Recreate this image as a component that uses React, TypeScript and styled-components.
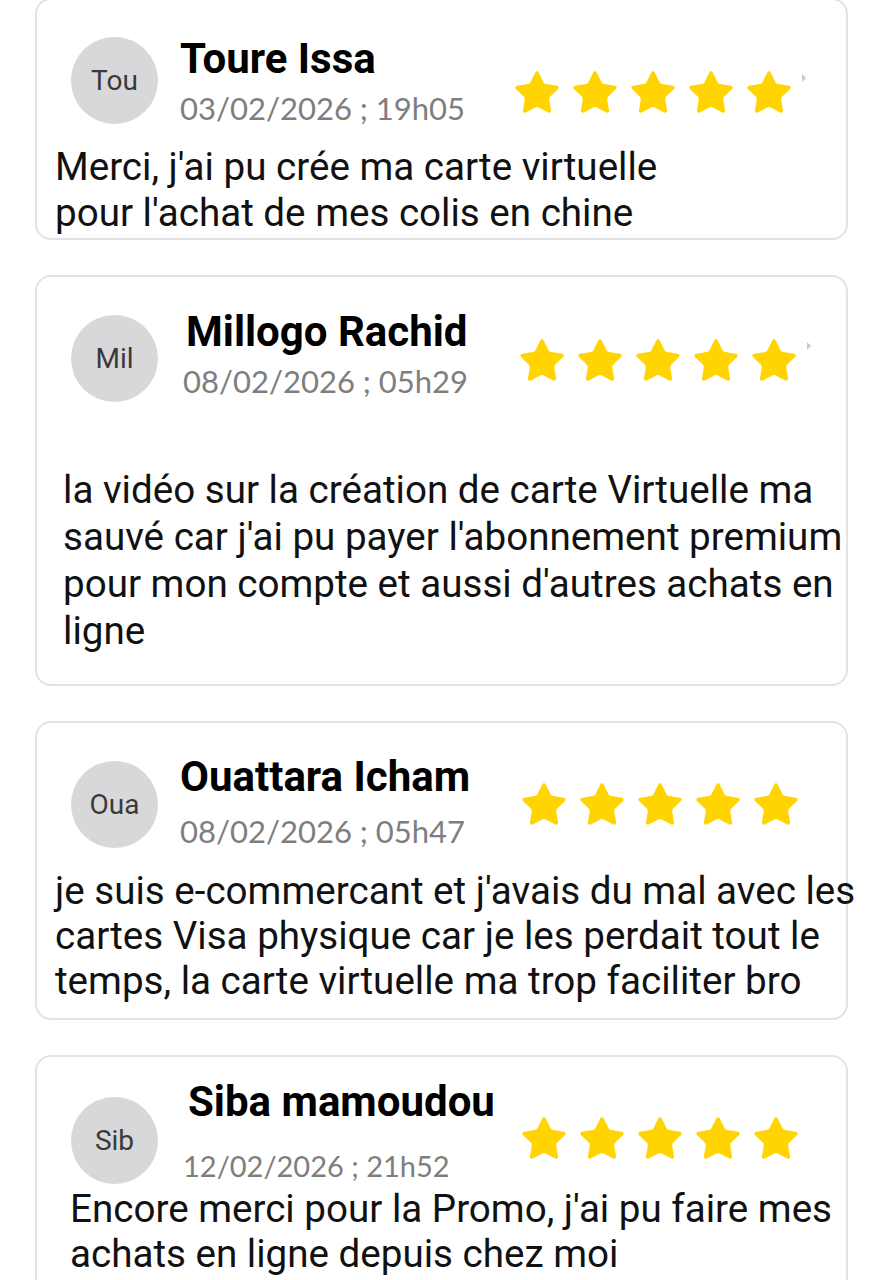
import React from "react";
import styled, { createGlobalStyle } from "styled-components";

const Global = createGlobalStyle`
  html, body { margin: 0; padding: 0; background: #ffffff; }
  body { font-family: Roboto, "Noto Sans", Arial, sans-serif; -webkit-font-smoothing: antialiased; }
  #root { height: 1280px; overflow: hidden; }
`;

const Page = styled.main`
  display: flex;
  flex-direction: column;
  gap: 35px;
  width: 813px;
  margin-top: -2px;
  padding-left: 35px;
`;

const Card = styled.section<{ $padBottom: number }>`
  box-sizing: border-box;
  width: 100%;
  display: flex;
  flex-direction: column;
  background: #ffffff;
  border: 2px solid #e3e3e5;
  border-radius: 16px;
  padding-bottom: ${(p) => p.$padBottom}px;
`;

const Header = styled.header<{ $padTop: number; $padRight: number }>`
  display: flex;
  align-items: center;
  height: 87px;
  margin-top: ${(p) => p.$padTop}px;
  padding: 0 ${(p) => p.$padRight}px 0 34px;
`;

const Avatar = styled.div`
  flex-shrink: 0;
  width: 87px;
  height: 87px;
  border-radius: 50%;
  background: #d8d8da;
  display: grid;
  place-items: center;
  font-family: Roboto, Arial, sans-serif;
  font-size: 28px;
  color: #3a3a3a;
`;

const Info = styled.div<{ $indent: number; $lift: number }>`
  flex: 1;
  display: flex;
  flex-direction: column;
  margin-left: ${(p) => p.$indent}px;
  margin-bottom: ${(p) => p.$lift}px;
`;

const Name = styled.h3<{ $size: number; $gap: number }>`
  margin: 0 0 ${(p) => p.$gap}px 0;
  font-family: Roboto, Arial, sans-serif;
  font-weight: 700;
  font-size: ${(p) => p.$size}px;
  line-height: 50px;
  color: #000000;
  white-space: nowrap;
`;

const DateLine = styled.div<{ $shift: number; $size: number }>`
  margin-left: ${(p) => p.$shift}px;
  font-family: Lato, "Open Sans", Arial, sans-serif;
  font-size: ${(p) => p.$size}px;
  line-height: 36px;
  color: #7e7e7e;
  white-space: nowrap;
`;

const Stars = styled.div<{ $shift: number }>`
  display: flex;
  align-items: center;
  gap: 8px;
  margin-top: ${(p) => p.$shift}px;
`;

const Mark = styled.span`
  width: 0;
  height: 0;
  align-self: flex-start;
  margin-top: 6px;
  border-top: 4px solid transparent;
  border-bottom: 4px solid transparent;
  border-left: 4px solid #c9c9c9;
`;

const Body = styled.p<{ $gap: number; $indent: number; $lh: number }>`
  margin: ${(p) => p.$gap}px 0 0 0;
  padding-left: ${(p) => p.$indent}px;
  font-family: Roboto, Arial, sans-serif;
  font-size: 38.6px;
  line-height: ${(p) => p.$lh}px;
  color: #111111;
  white-space: nowrap;
`;

const StarIcon = () => (
  <svg width="50" height="50" viewBox="0 0 24 24" aria-hidden="true">
    <path
      d="M11.525 2.295a.53.53 0 0 1 .95 0l2.31 4.679a2.123 2.123 0 0 0 1.595 1.16l5.166.756a.53.53 0 0 1 .294.904l-3.736 3.638a2.123 2.123 0 0 0-.611 1.878l.882 5.14a.53.53 0 0 1-.771.56l-4.618-2.428a2.122 2.122 0 0 0-1.973 0L6.396 21.01a.53.53 0 0 1-.77-.56l.881-5.139a2.122 2.122 0 0 0-.611-1.879L2.16 9.795a.53.53 0 0 1 .294-.906l5.165-.755a2.122 2.122 0 0 0 1.597-1.16z"
      fill="#FFD400"
      stroke="#FFD400"
      strokeWidth="0.8"
      strokeLinejoin="round"
    />
  </svg>
);

type Review = {
  initials: string;
  name: string;
  date: string;
  lines: string[];
  nameSize: number;
  nameIndent: number;
  nameGap: number;
  lift: number;
  dateShift: number;
  dateSize: number;
  padTop: number;
  padRight: number;
  starShift: number;
  mark: boolean;
  bodyGap: number;
  bodyIndent: number;
  lineHeight: number;
  padBottom: number;
};

const reviews: Review[] = [
  {
    initials: "Tou",
    name: "Toure Issa",
    date: "03/02/2026 ; 19h05",
    lines: ["Merci, j'ai pu crée ma carte virtuelle", "pour l'achat de mes colis en chine"],
    nameSize: 42,
    nameIndent: 22,
    nameGap: 6,
    lift: 2,
    dateShift: 0,
    dateSize: 31,
    padTop: 37,
    padRight: 40,
    starShift: 24,
    mark: true,
    bodyGap: 20,
    bodyIndent: 18,
    lineHeight: 46,
    padBottom: 2,
  },
  {
    initials: "Mil",
    name: "Millogo Rachid",
    date: "08/02/2026 ; 05h29",
    lines: [
      "la vidéo sur la création de carte Virtuelle ma",
      "sauvé car j'ai pu payer l'abonnement premium",
      "pour mon compte et aussi d'autres achats en",
      "ligne",
    ],
    nameSize: 42,
    nameIndent: 28,
    nameGap: 6,
    lift: 12,
    dateShift: -3,
    dateSize: 31,
    padTop: 38,
    padRight: 35,
    starShift: 4,
    mark: true,
    bodyGap: 64,
    bodyIndent: 26,
    lineHeight: 47,
    padBottom: 30,
  },
  {
    initials: "Oua",
    name: "Ouattara Icham",
    date: "08/02/2026 ; 05h47",
    lines: [
      "je suis e-commercant et j'avais du mal avec les",
      "cartes Visa physique car je les perdait tout le",
      "temps, la carte virtuelle ma trop faciliter bro",
    ],
    nameSize: 42,
    nameIndent: 22,
    nameGap: 11,
    lift: 9,
    dateShift: 0,
    dateSize: 31,
    padTop: 38,
    padRight: 45,
    starShift: 0,
    mark: false,
    bodyGap: 20,
    bodyIndent: 18,
    lineHeight: 45,
    padBottom: 15,
  },
  {
    initials: "Sib",
    name: "Siba mamoudou",
    date: "12/02/2026 ; 21h52",
    lines: ["Encore merci pour la Promo, j'ai pu faire mes", "achats en ligne depuis chez moi"],
    nameSize: 42,
    nameIndent: 30,
    nameGap: 21,
    lift: 21,
    dateShift: -5,
    dateSize: 29,
    padTop: 40,
    padRight: 45,
    starShift: -4,
    mark: false,
    bodyGap: 2,
    bodyIndent: 33,
    lineHeight: 45,
    padBottom: 30,
  },
];

export default function App() {
  return (
    <>
      <Global />
      <Page>
        {reviews.map((r) => (
          <Card key={r.name} $padBottom={r.padBottom}>
            <Header $padTop={r.padTop} $padRight={r.padRight}>
              <Avatar>{r.initials}</Avatar>
              <Info $indent={r.nameIndent} $lift={r.lift}>
                <Name $size={r.nameSize} $gap={r.nameGap}>
                  {r.name}
                </Name>
                <DateLine $shift={r.dateShift} $size={r.dateSize}>
                  {r.date}
                </DateLine>
              </Info>
              <Stars $shift={r.starShift}>
                {[0, 1, 2, 3, 4].map((i) => (
                  <StarIcon key={i} />
                ))}
                {r.mark && <Mark />}
              </Stars>
            </Header>
            <Body $gap={r.bodyGap} $indent={r.bodyIndent} $lh={r.lineHeight}>
              {r.lines.map((l, i) => (
                <React.Fragment key={i}>
                  {i > 0 && <br />}
                  {l}
                </React.Fragment>
              ))}
            </Body>
          </Card>
        ))}
      </Page>
    </>
  );
}
